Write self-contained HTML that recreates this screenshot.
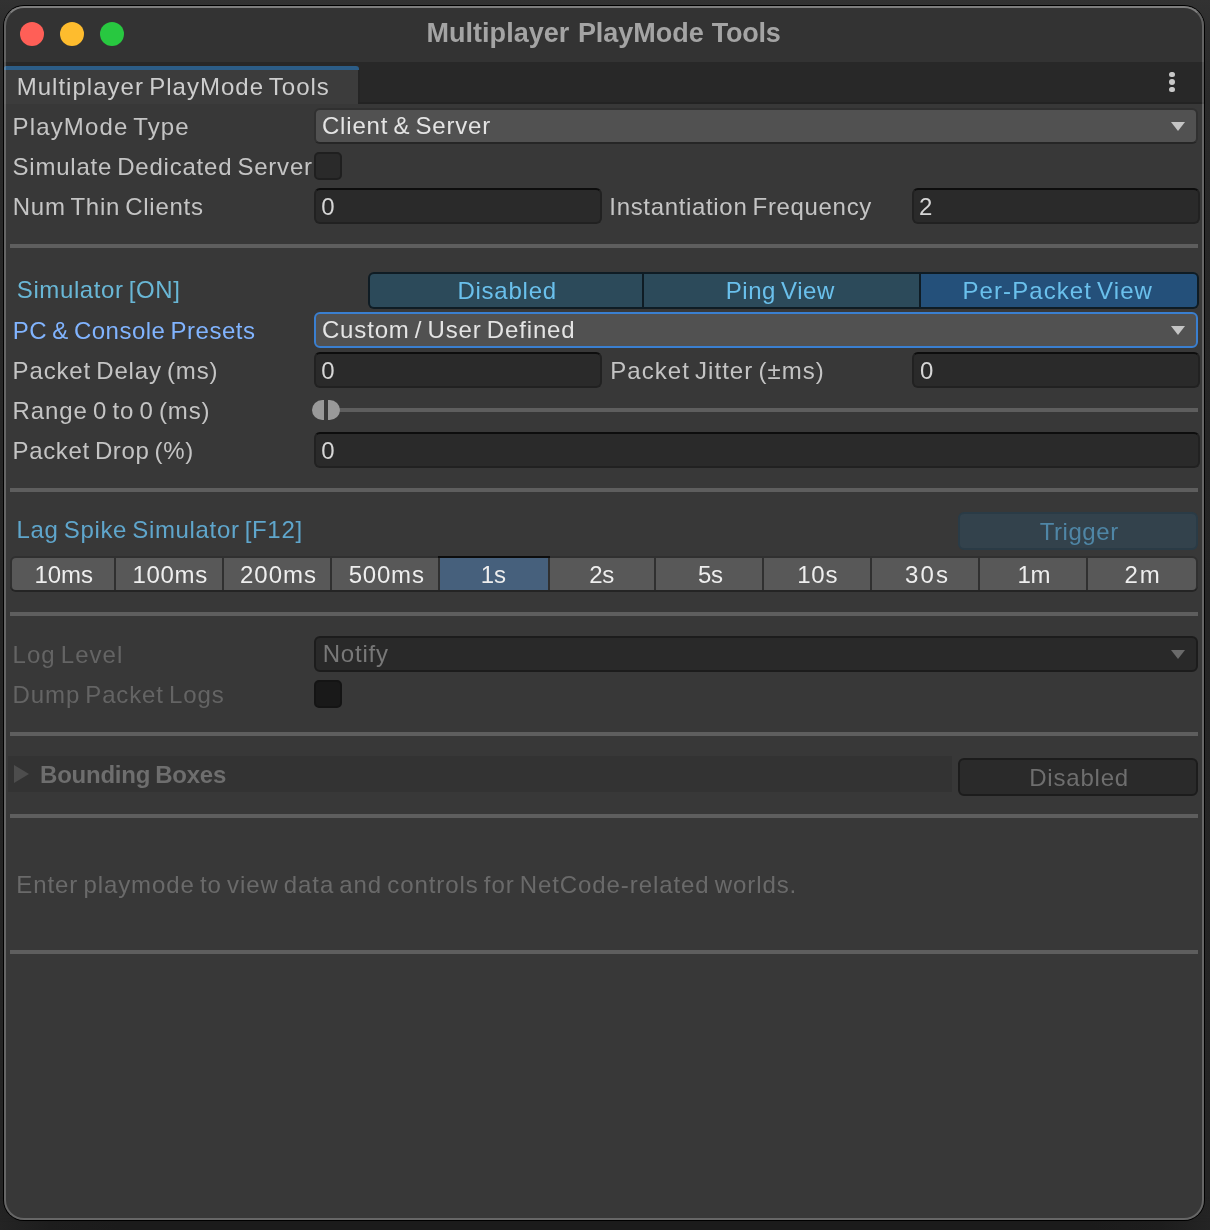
<!DOCTYPE html>
<html><head><meta charset="utf-8"><title>Multiplayer PlayMode Tools</title>
<style>
html,body{margin:0;padding:0;}
body{width:1210px;height:1230px;overflow:hidden;position:relative;
 background:linear-gradient(180deg,#323232 0px,#2e2e2e 30px,#2a2a2a 100px,#272727 300px,#252525 600px,#242424 1190px,#232323 1230px);
 font-family:"Liberation Sans",sans-serif;}
.a{position:absolute;box-sizing:border-box;}
.t{position:absolute;white-space:pre;line-height:40px;height:40px;font-family:"Liberation Sans",sans-serif;}
#win{left:3px;top:5px;width:1202px;height:1216px;border-radius:21px;background:#000;}
#rim{left:4px;top:6px;width:1200px;height:1214px;border-radius:20px;border:2px solid rgba(255,255,255,.23);border-top-color:rgba(255,255,255,.37);}
#inner{left:4px;top:6px;width:1200px;height:1214px;border-radius:20px;background:#383838;overflow:hidden;}
#titlebar{left:0;top:0;width:1200px;height:56px;background:#333333;}
#tabbar{left:0;top:56px;width:1200px;height:42px;background:#282828;border-bottom:2px solid #232323;}
#tab{left:0;top:64px;width:354px;height:34px;background:#3c3c3c;}
#tabline{left:0;top:60px;width:355px;height:4px;background:#2c5d87;border-radius:2px 3px 0 0;}
.tl{width:24px;height:24px;border-radius:12px;top:22px;}
.sep{left:10px;width:1188px;height:4px;background:#5e5e5e;}
.dd{left:314px;width:884px;height:36px;border-radius:6px;background:#515151;border:2px solid #303030;border-bottom-color:#262626;}
.in{height:36px;border-radius:6px;background:#2a2a2a;border:2px solid #212121;border-top-color:#0d0d0d;}
.cb{left:314px;width:28px;height:28px;border-radius:5px;background:#2a2a2a;border:2px solid #1f1f1f;}
.tri{width:0;height:0;border-left:7.5px solid transparent;border-right:7.5px solid transparent;border-top:9.5px solid #c4c4c4;}
.dot{left:1169.4px;width:5.2px;height:5.2px;border-radius:3px;background:#c8c8c8;}
</style></head><body>
<div class="a" style="left:0;top:1196px;width:1210px;height:34px;background:linear-gradient(90deg,#242424 0,#1d1d1d 50px,#1b1b1b 120px,#1b1b1b 1090px,#1d1d1d 1160px,#242424 1210px);-webkit-mask-image:linear-gradient(180deg,transparent 0,#000 26px);mask-image:linear-gradient(180deg,transparent 0,#000 26px);"></div>
<div class="a" id="win"></div>
<div class="a" id="inner">
  <div class="a" id="titlebar"></div>
  <div class="a" id="tabbar"></div>
  <div class="a" id="tab"></div>
  <div class="a" style="left:354px;top:64px;width:2px;height:32px;background:#252525;"></div>
  <div class="a" id="tabline"></div>
</div>
<div class="a" id="rim"></div>
<!-- traffic lights -->
<div class="a tl" style="left:20px;background:#ff5f57;"></div>
<div class="a tl" style="left:60px;background:#febc2e;"></div>
<div class="a tl" style="left:100px;background:#28c840;"></div>
<!-- kebab -->
<div class="a dot" style="top:71.9px"></div>
<div class="a dot" style="top:79.4px"></div>
<div class="a dot" style="top:86.9px"></div>

<!-- row 1 dropdown -->
<div class="a dd" style="top:108px"></div>
<div class="a tri" style="left:1171px;top:122px"></div>
<!-- checkbox -->
<div class="a cb" style="top:152px"></div>
<!-- inputs -->
<div class="a in" style="left:314px;top:188px;width:288px"></div>
<div class="a in" style="left:912px;top:188px;width:288px"></div>
<div class="a sep" style="top:244px"></div>

<!-- simulator toolbar -->
<div class="a" style="left:368px;top:272px;width:831px;height:37px;border-radius:6px;background:#0f1c24;"></div>
<div class="a" style="left:370px;top:274px;width:272px;height:33px;background:#2c4a5a;border-radius:4px 0 0 4px;"></div>
<div class="a" style="left:644px;top:274px;width:275px;height:33px;background:#2c4a5a;"></div>
<div class="a" style="left:921px;top:274px;width:276px;height:33px;background:#24507a;border-radius:0 4px 4px 0;"></div>
<!-- focused dropdown -->
<div class="a dd" style="top:312px;border-color:#3a7fd0;"></div>
<div class="a tri" style="left:1171px;top:326px"></div>
<!-- delay/jitter -->
<div class="a in" style="left:314px;top:352px;width:288px"></div>
<div class="a in" style="left:912px;top:352px;width:288px"></div>
<!-- slider -->
<div class="a" style="left:339px;top:408px;width:859px;height:4px;background:#5e5e5e;"></div>
<div class="a" style="left:311.9px;top:399.8px;width:12.3px;height:20.4px;background:#999;border-radius:10.5px 0 0 10.5px / 10.2px 0 0 10.2px;"></div>
<div class="a" style="left:327.9px;top:399.8px;width:12.3px;height:20.4px;background:#999;border-radius:0 10.5px 10.5px 0 / 0 10.2px 10.2px 0;"></div>
<!-- drop -->
<div class="a in" style="left:314px;top:432px;width:886px"></div>
<div class="a sep" style="top:488px"></div>

<!-- trigger -->
<div class="a" style="left:958px;top:512px;width:240px;height:38px;border-radius:6px;background:#33424c;border:2px solid #2a3b46;"></div>
<!-- lag buttons -->
<div class="a" id="lag" style="left:10px;top:556px;width:1188px;height:36px;border-radius:6px;background:#303030;overflow:hidden;border-bottom:2px solid #242424;">
</div>
<div class="a" style="left:12px;top:558px;width:102px;height:32px;background:#585858;border-radius:4px 0 0 4px;"></div>
<div class="a" style="left:116px;top:558px;width:106px;height:32px;background:#585858;"></div>
<div class="a" style="left:224px;top:558px;width:106px;height:32px;background:#585858;"></div>
<div class="a" style="left:332px;top:558px;width:106px;height:32px;background:#585858;"></div>
<div class="a" style="left:438px;top:556px;width:112px;height:2px;background:#0d0d0d;"></div>
<div class="a" style="left:440px;top:558px;width:108px;height:32px;background:#46607c;"></div>
<div class="a" style="left:550px;top:558px;width:104px;height:32px;background:#585858;"></div>
<div class="a" style="left:656px;top:558px;width:106px;height:32px;background:#585858;"></div>
<div class="a" style="left:764px;top:558px;width:106px;height:32px;background:#585858;"></div>
<div class="a" style="left:872px;top:558px;width:106px;height:32px;background:#585858;"></div>
<div class="a" style="left:980px;top:558px;width:106px;height:32px;background:#585858;"></div>
<div class="a" style="left:1088px;top:558px;width:108px;height:32px;background:#585858;border-radius:0 4px 4px 0;"></div>
<div class="a sep" style="top:612px"></div>

<!-- log level -->
<div class="a dd" style="top:636px;background:#292929;border-color:#1c1c1c;"></div>
<div class="a tri" style="left:1171px;top:650px;border-top-color:#6a6a6a"></div>
<div class="a cb" style="top:680px;background:#191919;border-color:#141414;"></div>
<div class="a sep" style="top:732px"></div>

<!-- bounding boxes -->
<div class="a" style="left:8px;top:756px;width:944px;height:36px;background:#333333;"></div>
<div class="a" style="left:14px;top:765px;width:0;height:0;border-top:9px solid transparent;border-bottom:9px solid transparent;border-left:15.5px solid #4d4d4d;"></div>
<div class="a" style="left:958px;top:758px;width:240px;height:38px;border-radius:6px;background:#2a2a2a;border:2px solid #1c1c1c;"></div>
<div class="a sep" style="top:814px"></div>
<div class="a sep" style="top:950px"></div>

<div id="txt" style="position:absolute;left:0;top:0;width:1210px;height:1230px;will-change:transform;">
<span class="t" style="left:426.50px;top:12.64px;font-size:27px;letter-spacing:0.028px;word-spacing:0.472px;color:#a4a4a4;font-weight:bold">Multiplayer</span>
<span class="t" style="left:577.90px;top:12.64px;font-size:27px;letter-spacing:-0.031px;word-spacing:0.531px;color:#a4a4a4;font-weight:bold">PlayMode</span>
<span class="t" style="left:711.81px;top:12.64px;font-size:27px;letter-spacing:-0.250px;word-spacing:0.750px;color:#a4a4a4;font-weight:bold">Tools</span>
<span class="t" style="left:16.70px;top:66.68px;font-size:24px;letter-spacing:1.021px;word-spacing:-2.521px;color:#cdcdcd;font-weight:normal">Multiplayer PlayMode Tools</span>
<span class="t" style="left:12.50px;top:106.68px;font-size:24px;letter-spacing:1.157px;word-spacing:-2.657px;color:#c4c4c4;font-weight:normal">PlayMode Type</span>
<span class="t" style="left:12.50px;top:146.68px;font-size:24px;letter-spacing:0.774px;word-spacing:-2.274px;color:#c4c4c4;font-weight:normal">Simulate Dedicated Server</span>
<span class="t" style="left:12.80px;top:186.68px;font-size:24px;letter-spacing:0.734px;word-spacing:-2.234px;color:#c4c4c4;font-weight:normal">Num Thin Clients</span>
<span class="t" style="left:321.90px;top:105.68px;font-size:24px;letter-spacing:0.833px;word-spacing:-2.333px;color:#e4e4e4;font-weight:normal">Client &amp; Server</span>
<span class="t" style="left:321.20px;top:186.68px;font-size:24px;letter-spacing:0.000px;word-spacing:-1.500px;color:#d6d6d6;font-weight:normal">0</span>
<span class="t" style="left:609.30px;top:186.68px;font-size:24px;letter-spacing:0.668px;word-spacing:-2.168px;color:#c4c4c4;font-weight:normal">Instantiation Frequency</span>
<span class="t" style="left:919.10px;top:186.68px;font-size:24px;letter-spacing:0.000px;word-spacing:-1.500px;color:#d6d6d6;font-weight:normal">2</span>
<span class="t" style="left:16.80px;top:269.68px;font-size:24px;letter-spacing:0.608px;word-spacing:-2.108px;color:#69b7d6;font-weight:normal">Simulator [ON]</span>
<span class="t" style="left:457.40px;top:270.68px;font-size:24px;letter-spacing:0.766px;word-spacing:-2.266px;color:#6ac0ec;font-weight:normal">Disabled</span>
<span class="t" style="left:725.70px;top:270.68px;font-size:24px;letter-spacing:0.549px;word-spacing:-2.049px;color:#6ac0ec;font-weight:normal">Ping View</span>
<span class="t" style="left:962.50px;top:270.68px;font-size:24px;letter-spacing:1.074px;word-spacing:-2.574px;color:#6ac0ec;font-weight:normal">Per-Packet View</span>
<span class="t" style="left:12.80px;top:310.68px;font-size:24px;letter-spacing:0.489px;word-spacing:-1.989px;color:#81b4ff;font-weight:normal">PC &amp; Console Presets</span>
<span class="t" style="left:321.90px;top:309.68px;font-size:24px;letter-spacing:0.853px;word-spacing:-2.353px;color:#e4e4e4;font-weight:normal">Custom / User Defined</span>
<span class="t" style="left:12.60px;top:350.68px;font-size:24px;letter-spacing:0.846px;word-spacing:-2.346px;color:#c4c4c4;font-weight:normal">Packet Delay (ms)</span>
<span class="t" style="left:321.20px;top:350.68px;font-size:24px;letter-spacing:0.000px;word-spacing:-1.500px;color:#d6d6d6;font-weight:normal">0</span>
<span class="t" style="left:610.30px;top:350.68px;font-size:24px;letter-spacing:1.033px;word-spacing:-2.533px;color:#c4c4c4;font-weight:normal">Packet Jitter (±ms)</span>
<span class="t" style="left:920.10px;top:350.68px;font-size:24px;letter-spacing:0.000px;word-spacing:-1.500px;color:#d6d6d6;font-weight:normal">0</span>
<span class="t" style="left:12.60px;top:390.68px;font-size:24px;letter-spacing:0.909px;word-spacing:-2.409px;color:#c4c4c4;font-weight:normal">Range 0 to 0 (ms)</span>
<span class="t" style="left:12.60px;top:430.68px;font-size:24px;letter-spacing:0.628px;word-spacing:-2.128px;color:#c4c4c4;font-weight:normal">Packet Drop (%)</span>
<span class="t" style="left:321.20px;top:430.68px;font-size:24px;letter-spacing:0.000px;word-spacing:-1.500px;color:#d6d6d6;font-weight:normal">0</span>
<span class="t" style="left:16.60px;top:509.68px;font-size:24px;letter-spacing:0.658px;word-spacing:-2.158px;color:#5fa6cc;font-weight:normal">Lag Spike Simulator [F12]</span>
<span class="t" style="left:1039.70px;top:511.68px;font-size:24px;letter-spacing:0.561px;word-spacing:-2.061px;color:#4f86a6;font-weight:normal">Trigger</span>
<span class="t" style="left:34.60px;top:554.68px;font-size:24px;letter-spacing:-0.096px;word-spacing:-1.404px;color:#eeeeee;font-weight:normal">10ms</span>
<span class="t" style="left:132.40px;top:554.68px;font-size:24px;letter-spacing:0.716px;word-spacing:-2.216px;color:#eeeeee;font-weight:normal">100ms</span>
<span class="t" style="left:239.90px;top:554.68px;font-size:24px;letter-spacing:1.041px;word-spacing:-2.541px;color:#eeeeee;font-weight:normal">200ms</span>
<span class="t" style="left:348.70px;top:554.68px;font-size:24px;letter-spacing:0.791px;word-spacing:-2.291px;color:#eeeeee;font-weight:normal">500ms</span>
<span class="t" style="left:480.85px;top:554.68px;font-size:24px;letter-spacing:-0.250px;word-spacing:-1.250px;color:#eeeeee;font-weight:normal">1s</span>
<span class="t" style="left:589.25px;top:554.68px;font-size:24px;letter-spacing:-0.250px;word-spacing:-1.250px;color:#eeeeee;font-weight:normal">2s</span>
<span class="t" style="left:697.90px;top:554.68px;font-size:24px;letter-spacing:-0.248px;word-spacing:-1.252px;color:#eeeeee;font-weight:normal">5s</span>
<span class="t" style="left:797.20px;top:554.68px;font-size:24px;letter-spacing:0.752px;word-spacing:-2.252px;color:#eeeeee;font-weight:normal">10s</span>
<span class="t" style="left:905.10px;top:554.68px;font-size:24px;letter-spacing:2.152px;word-spacing:-3.652px;color:#eeeeee;font-weight:normal">30s</span>
<span class="t" style="left:1017.45px;top:554.68px;font-size:24px;letter-spacing:-0.250px;word-spacing:-1.250px;color:#eeeeee;font-weight:normal">1m</span>
<span class="t" style="left:1124.60px;top:554.68px;font-size:24px;letter-spacing:1.752px;word-spacing:-3.252px;color:#eeeeee;font-weight:normal">2m</span>
<span class="t" style="left:12.60px;top:634.68px;font-size:24px;letter-spacing:1.007px;word-spacing:-2.507px;color:#646464;font-weight:normal">Log Level</span>
<span class="t" style="left:322.70px;top:633.68px;font-size:24px;letter-spacing:0.790px;word-spacing:-2.290px;color:#787878;font-weight:normal">Notify</span>
<span class="t" style="left:12.60px;top:674.68px;font-size:24px;letter-spacing:0.872px;word-spacing:-2.372px;color:#646464;font-weight:normal">Dump Packet Logs</span>
<span class="t" style="left:40.09px;top:754.68px;font-size:24px;letter-spacing:-0.250px;word-spacing:-1.250px;color:#6e6e6e;font-weight:bold">Bounding Boxes</span>
<span class="t" style="left:1029.20px;top:757.68px;font-size:24px;letter-spacing:0.794px;word-spacing:-2.294px;color:#6e6e6e;font-weight:normal">Disabled</span>
<span class="t" style="left:16.30px;top:864.68px;font-size:24px;letter-spacing:0.915px;word-spacing:-2.415px;color:#6a6a6a;font-weight:normal">Enter playmode to view data and controls for NetCode-related worlds.</span>
</div>
</body></html>
